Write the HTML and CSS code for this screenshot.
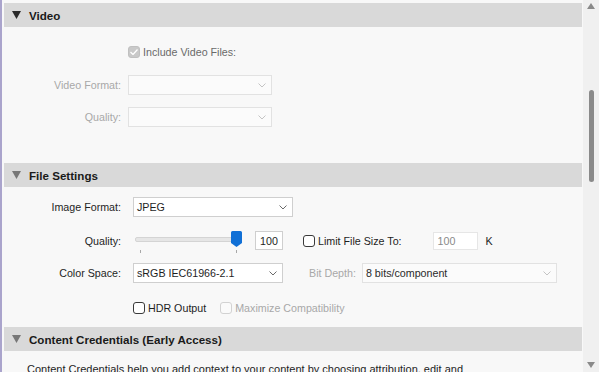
FILE: index.html
```html
<!DOCTYPE html>
<html>
<head>
<meta charset="utf-8">
<link rel="stylesheet" href="styles.css">
</head>
<body>
<div class="window">
  <div class="panel">
    <div class="header first">
      <svg class="tri dark" width="9" height="8" viewBox="0 0 9 8"><polygon points="0,0 9,0 4.5,8"/></svg>
      <span>Video</span>
    </div>
    <div class="sec video-sec">
      <div class="row r-check">
        <span class="lbl"></span>
        <span class="cb cb-dis-checked"><svg width="8" height="6" viewBox="0 0 8 6"><polyline points="0.5,3 3,5.5 7.5,0.5"/></svg></span>
        <span class="cb-text dim">Include Video Files:</span>
      </div>
      <div class="row r-vf">
        <span class="lbl off">Video Format:</span>
        <div class="dd dd-dis w144"><span></span><svg class="chev" width="8" height="5" viewBox="0 0 8 5"><polyline points="0.5,0.5 4,4 7.5,0.5"/></svg></div>
      </div>
      <div class="row r-vq">
        <span class="lbl off">Quality:</span>
        <div class="dd dd-dis w144"><span></span><svg class="chev" width="8" height="5" viewBox="0 0 8 5"><polyline points="0.5,0.5 4,4 7.5,0.5"/></svg></div>
      </div>
    </div>

    <div class="header">
      <svg class="tri" width="9" height="8" viewBox="0 0 9 8"><polygon points="0,0 9,0 4.5,8"/></svg>
      <span>File Settings</span>
    </div>
    <div class="sec file-sec">
      <div class="row r-if">
        <span class="lbl">Image Format:</span>
        <div class="dd w160"><span>JPEG</span><svg class="chev en" width="8" height="5" viewBox="0 0 8 5"><polyline points="0.5,0.5 4,4 7.5,0.5"/></svg></div>
      </div>
      <div class="row r-q">
        <span class="lbl">Quality:</span>
        <div class="slider">
          <div class="track"></div>
          <span class="tick t1"></span>
          <span class="tick t2"></span>
          <svg class="thumb" width="11" height="16" viewBox="0 0 11 16"><path d="M1.5 0H9.5A1.5 1.5 0 0 1 11 1.5V12L5.5 16L0 12V1.5A1.5 1.5 0 0 1 1.5 0Z"/></svg>
        </div>
        <div class="num">100</div>
        <span class="cb cb-en limit"></span>
        <span class="cb-text">Limit File Size To:</span>
        <div class="num2">100</div>
        <span class="k">K</span>
      </div>
      <div class="row r-cs">
        <span class="lbl">Color Space:</span>
        <div class="dd w150"><span>sRGB IEC61966-2.1</span><svg class="chev en" width="8" height="5" viewBox="0 0 8 5"><polyline points="0.5,0.5 4,4 7.5,0.5"/></svg></div>
        <span class="bd-lbl">Bit Depth:</span>
        <div class="dd dd-dis w195"><span class="dark">8 bits/component</span><svg class="chev" width="8" height="5" viewBox="0 0 8 5"><polyline points="0.5,0.5 4,4 7.5,0.5"/></svg></div>
      </div>
      <div class="row r-hdr">
        <span class="lbl"></span>
        <span class="cb cb-en"></span>
        <span class="cb-text">HDR Output</span>
        <span class="cb cb-dis max"></span>
        <span class="cb-text off">Maximize Compatibility</span>
      </div>
    </div>

    <div class="header">
      <svg class="tri" width="9" height="8" viewBox="0 0 9 8"><polygon points="0,0 9,0 4.5,8"/></svg>
      <span>Content Credentials (Early Access)</span>
    </div>
    <div class="sec cc-sec">
      <p class="para">Content Credentials help you add context to your content by choosing attribution, edit and activity information to include with your exported image.</p>
    </div>
  </div>
  <div class="scrollbar">
    <svg class="arrow up" width="8" height="6" viewBox="0 0 8 6"><polygon points="4,0 8,6 0,6"/></svg>
    <div class="sthumb"></div>
    <svg class="arrow down" width="8" height="6" viewBox="0 0 8 6"><polygon points="0,0 8,0 4,6"/></svg>
  </div>
</div>
</body>
</html>
```
FILE: styles.css
```css
* { box-sizing: border-box; }
html, body { margin: 0; padding: 0; }
body {
  width: 599px;
  height: 372px;
  overflow: hidden;
  background: #ffffff;
  font-family: "Liberation Sans", Arial, sans-serif;
  font-size: 10.7px;
  color: #1e1e1e;
}
.window {
  display: flex;
  height: 372px;
}
.panel {
  width: 583px;
  height: 372px;
  overflow: hidden;
  background: #f8f8f8;
  border-left: 2px solid #aaa4cc;
  padding: 0 1px 0 2px;
}
.header {
  height: 24px;
  background: #d9d9d9;
  display: flex;
  align-items: center;
  padding-left: 8px;
  font-weight: bold;
  font-size: 11.6px;
  color: #1a1a1a;
}
.header.first { margin-top: 3px; }
.tri { fill: #777; margin-right: 8px; flex: none; }
.tri.dark { fill: #2a2a2a; }

.sec { display: flex; flex-direction: column; }
.video-sec { height: 136px; padding-top: 15px; }
.file-sec { height: 140px; padding-top: 10px; }
.cc-sec { padding: 10px 0 0 23px; }

.row {
  display: flex;
  align-items: center;
  height: 20px;
  flex: none;
}
.r-vf { margin-top: 13px; }
.r-vq { margin-top: 12px; }
.r-q { margin-top: 14px; height: 19px; }
.r-cs { margin-top: 13px; }
.r-hdr { margin-top: 15px; }

.lbl {
  width: 117px;
  text-align: right;
  flex: none;
  margin-right: 12px;
}
.video-sec .lbl { margin-right: 7px; }
.lbl.off { color: #a8a8a8; }
.dim { color: #6a6a6a; }
.off { color: #a8a8a8; }

.cb {
  width: 12px;
  height: 12px;
  border-radius: 3px;
  flex: none;
  display: flex;
  align-items: center;
  justify-content: center;
}
.cb-en { border: 1px solid #3a3a3a; background: #fff; }
.cb-dis { border: 1px solid #d2d2d2; background: #fafafa; }
.cb-dis-checked { background: #c9c9c9; border: 1px solid #c0c0c0; }
.cb-dis-checked svg { fill: none; stroke: #fff; stroke-width: 1.3; }
.cb-text { margin-left: 3px; }

.dd {
  height: 20px;
  border: 1px solid #cfcfcf;
  background: #ffffff;
  display: flex;
  align-items: center;
  justify-content: space-between;
  padding: 0 5px 0 3px;
  flex: none;
}
.dd-dis { border-color: #e2e2e2; background: #fbfbfb; }
.dd .dark { color: #2a2a2a; }
.w144 { width: 144px; }
.w160 { width: 160px; }
.w150 { width: 150px; }
.w195 { width: 195px; }
.chev { fill: none; stroke: #c4c4c4; stroke-width: 1; flex: none; }
.chev.en { stroke: #6a6a6a; }

.slider {
  position: relative;
  width: 110px;
  height: 19px;
  flex: none;
}
.track {
  position: absolute;
  left: 2px;
  top: 6px;
  width: 98px;
  height: 5px;
  background: #e6e6e6;
  border: 1px solid #d4d4d4;
  border-radius: 2px;
}
.tick {
  position: absolute;
  top: 19px;
  width: 1px;
  height: 3px;
  background: #a8a8a8;
}
.t1 { left: 7px; }
.t2 { left: 103px; }
.thumb {
  position: absolute;
  left: 98px;
  top: 0;
  fill: #1170d6;
}
.num {
  margin-left: 12px;
  width: 28px;
  height: 19px;
  border: 1px solid #cfcfcf;
  background: #fff;
  display: flex;
  align-items: center;
  justify-content: center;
  flex: none;
}
.limit { margin-left: 20px; }
.num2 {
  margin-left: 31px;
  width: 45px;
  height: 18px;
  border: 1px solid #e6e6e6;
  background: #fff;
  color: #8a8a8a;
  padding-left: 4px;
  display: flex;
  align-items: center;
  flex: none;
}
.k { margin-left: 8px; }

.bd-lbl { color: #a8a8a8; margin-left: 26px; margin-right: 6px; }
.max { margin-left: 14px; }

.para {
  margin: 0;
  color: #1e1e1e;
  font-size: 11px;
  line-height: 16px;
  width: 450px;
}

.scrollbar {
  width: 16px;
  height: 372px;
  background: #f0f0f0;
  display: flex;
  flex-direction: column;
  align-items: center;
}
.arrow { fill: #8a8a8a; flex: none; }
.arrow.up { margin-top: 3px; }
.sthumb {
  margin-top: 81px;
  width: 5px;
  height: 92px;
  background: #8a8a8a;
  border-radius: 3px;
}
.arrow.down { margin-top: auto; margin-bottom: 4px; }
```
